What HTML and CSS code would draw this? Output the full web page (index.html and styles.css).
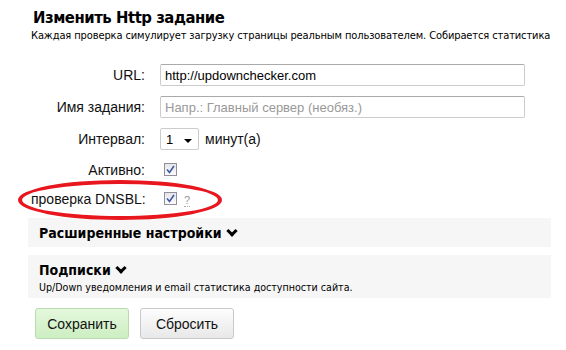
FILE: index.html
```html
<!DOCTYPE html>
<html lang="ru">
<head>
    <meta charset="UTF-8">
    <meta name="viewport" content="width=device-width, initial-scale=1.0">
    <title>Изменить Http задание</title>
    <link rel="stylesheet" href="styles.css">
</head>
<body>
    <div class="page">
        <h1 class="title">Изменить Http задание</h1>
        <p class="lead">Каждая проверка симулирует загрузку страницы реальным пользователем. Собирается статистика</p>

        <form class="task-form">
            <div class="row">
                <label class="row-label" for="url">URL:</label>
                <input class="text-input" id="url" type="text" value="http://updownchecker.com">
            </div>
            <div class="row">
                <label class="row-label" for="name">Имя задания:</label>
                <input class="text-input" id="name" type="text" placeholder="Напр.: Главный сервер (необяз.)">
            </div>
            <div class="row">
                <label class="row-label" for="interval">Интервал:</label>
                <div class="select-box" id="interval">
                    <span>1</span>
                    <span class="caret"></span>
                </div>
                <span class="unit">минут(а)</span>
            </div>
            <div class="row row-check">
                <label class="row-label">Активно:</label>
                <span class="check"><svg width="9" height="9" viewBox="0 0 9 9"><path d="M1 4.5 L3.5 7.5 L8 1" fill="none" stroke="#3d5a9e" stroke-width="1.6"/></svg></span>
            </div>
            <div class="row row-check row-dnsbl">
                <label class="row-label">проверка DNSBL:</label>
                <span class="check"><svg width="9" height="9" viewBox="0 0 9 9"><path d="M1 4.5 L3.5 7.5 L8 1" fill="none" stroke="#3d5a9e" stroke-width="1.6"/></svg></span>
                <span class="hint">?</span>
                <span class="ring"></span>
            </div>

            <div class="panel">
                <div class="panel-title">Расширенные настройки <span class="chevron"></span></div>
            </div>
            <div class="panel panel-subs">
                <div class="panel-title">Подписки <span class="chevron"></span></div>
                <div class="panel-note">Up/Down уведомления и email статистика доступности сайта.</div>
            </div>

            <div class="actions">
                <button type="button" class="btn btn-save">Сохранить</button>
                <button type="reset" class="btn">Сбросить</button>
            </div>
        </form>
    </div>
</body>
</html>
```

FILE: styles.css
```css
body {
    margin: 0;
    background: #fff;
    color: #000;
    font-family: "DejaVu Sans Condensed", "DejaVu Sans", sans-serif;
}

.page {
    padding: 7px 0 0 31px;
}

.title {
    margin: 0 0 0 2px;
    font-size: 16.5px;
    font-weight: bold;
    letter-spacing: -0.45px;
    line-height: 22px;
}

.lead {
    margin: 0;
    font-size: 11px;
    letter-spacing: -0.11px;
    line-height: 13px;
    white-space: nowrap;
}

.task-form {
    margin-top: 17px;
}

.row {
    display: flex;
    align-items: center;
    height: 32px;
    font-family: "Liberation Sans", Arial, sans-serif;
    font-size: 14px;
    white-space: nowrap;
}

.row-label {
    width: 114px;
    margin-right: 15px;
    text-align: right;
    color: #111;
}

.text-input {
    width: 365px;
    height: 22px;
    box-sizing: border-box;
    padding: 0 4px;
    border: 1px solid #ccc;
    border-top-color: #aaa;
    border-radius: 2px;
    font-family: "Liberation Sans", Arial, sans-serif;
    font-size: 13px;
    color: #000;
}

.text-input::placeholder {
    color: #999;
}

.select-box {
    display: flex;
    align-items: center;
    justify-content: space-between;
    width: 39px;
    height: 22px;
    box-sizing: border-box;
    padding: 0 6px 0 5px;
    border: 1px solid #ccc;
    border-radius: 2px;
    font-family: "Liberation Sans", Arial, sans-serif;
    font-size: 13px;
}

.caret {
    width: 0;
    height: 0;
    margin-top: 3px;
    border-left: 4px solid transparent;
    border-right: 4px solid transparent;
    border-top: 4px solid #000;
}

.unit {
    margin-left: 6px;
    color: #111;
}

.row-check {
    height: 29px;
}

.check {
    display: flex;
    align-items: center;
    justify-content: center;
    width: 11px;
    height: 11px;
    margin-left: 4px;
    border: 1px solid #8f8f9d;
    background: linear-gradient(#e6e6ea, #fafafa);
}

.hint {
    margin: 5px 0 0 7px;
    font-size: 11px;
    color: #999;
    border-bottom: 1px dotted #aaa;
    line-height: 11px;
}

.row-dnsbl {
    position: relative;
}

.ring {
    position: absolute;
    left: -13px;
    top: -4px;
    width: 196px;
    height: 32px;
    border: 4px solid #e8161f;
    border-radius: 50%;
}

.panel {
    margin: 5px 15px 0 -3px;
    padding: 7px 11px 6px;
    background: #f6f6f6;
}

.panel-subs {
    margin-top: 8px;
    padding-bottom: 5px;
}

.panel-title {
    font-size: 14px;
    font-weight: bold;
    line-height: 16px;
}

.chevron {
    display: inline-block;
    width: 5px;
    height: 5px;
    margin: 0 0 3px 2px;
    border-right: 3px solid #000;
    border-bottom: 3px solid #000;
    transform: rotate(45deg);
}

.panel-note {
    margin-top: 3px;
    font-size: 10.6px;
    line-height: 12px;
}

.actions {
    display: flex;
    gap: 11px;
    margin-top: 10px;
    padding-left: 4px;
}

.btn {
    width: 94px;
    height: 31px;
    padding: 0;
    border: 1px solid #c9c9c9;
    border-radius: 3px;
    background: linear-gradient(#fdfdfd, #e8e8e8);
    font-family: "Liberation Sans", Arial, sans-serif;
    font-size: 14px;
    color: #111;
}

.btn-save {
    border-color: #b8dbb0;
    background: linear-gradient(#e4f8dc, #cdeec2);
}
```
